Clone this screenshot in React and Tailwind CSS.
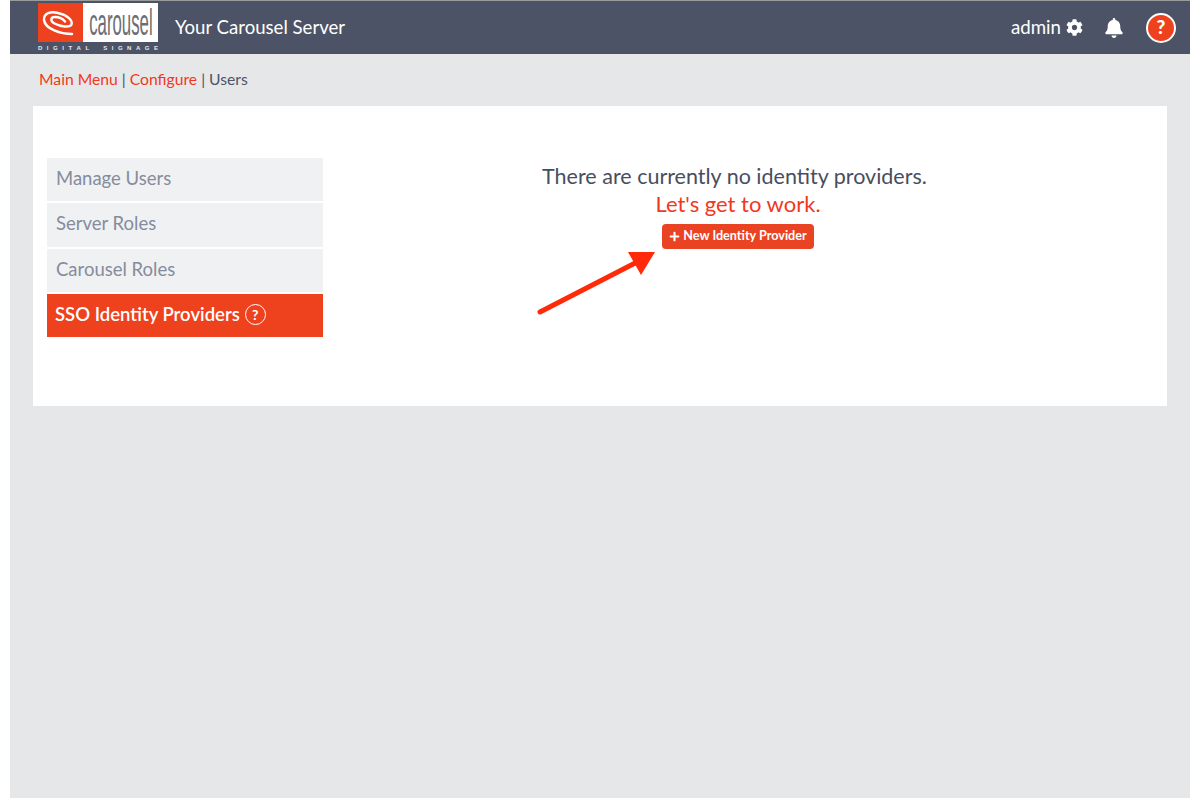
import { FaBell, FaCog, FaPlus } from 'react-icons/fa'

const menu = [
  { label: 'Manage Users', height: 'h-[43px]' },
  { label: 'Server Roles', height: 'h-[44px]' },
  { label: 'Carousel Roles', height: 'h-[43px]' },
]

function Logo() {
  return (
    <div className="flex w-[120px] flex-col">
      <div className="flex h-[39px]">
        <div className="w-[45px] bg-[#ee421e]">
          <svg width="45" height="39" viewBox="0 0 45 39" fill="none" stroke="#fff" strokeLinecap="round">
            <path
              d="M34 31 C23 31 7 26 6 17 C5.5 10 13 8 20 10 C29 12 35 17 33.5 21.5 C32 25 22 23.5 16.5 20.5 C12 18 12.5 14 17 14 C21 14 25 16 27 18.5"
              strokeWidth="2.4"
            />
          </svg>
        </div>
        <div className="flex flex-1 items-center justify-center overflow-hidden bg-white">
          <span className="origin-center scale-x-[0.6] scale-y-[1.3] font-['Liberation_Sans',sans-serif] text-[28px] leading-none text-[#6d6e71]">
            carousel
          </span>
        </div>
      </div>
      <div className="mt-[1px] flex h-[9px] items-center justify-between font-['Liberation_Sans',sans-serif] text-[6px] font-bold leading-none text-[#e8e9ec]">
        {'DIGITAL'.split('').map((c, i) => <span key={i}>{c}</span>)}
        <span className="w-[5px]" />
        {'SIGNAGE'.split('').map((c, i) => <span key={i}>{c}</span>)}
      </div>
    </div>
  )
}

export default function App() {
  return (
    <div className="ml-[10px] mr-[12px] flex min-h-[798px] flex-col bg-[#e6e7e9] font-['Lato',sans-serif]">
      <div className="h-px bg-[#9a9a9a]" />
      <header className="flex h-[53px] items-center bg-[#4d5366] pl-[28px] pr-[14px] text-white">
        <Logo />
        <span className="ml-[17px] text-[18.6px]">Your Carousel Server</span>
        <div className="ml-auto flex items-center">
          <span className="text-[18.7px]">admin</span>
          <FaCog size={17} className="ml-[5px]" />
          <FaBell size={20} className="ml-[21px]" />
          <span className="ml-[22px] flex h-[30px] w-[30px] items-center justify-center rounded-full border-2 border-white bg-[#ee421e] text-[19px] font-black">
            ?
          </span>
        </div>
      </header>
      <nav className="pl-[29px] pt-[14px] text-[15.7px] leading-[22px] text-[#4d5366]">
        <span className="text-[#f0391c]">Main Menu</span> | <span className="text-[#f0391c]">Configure</span> | Users
      </nav>
      <main className="relative mx-[23px] mt-[16px] flex h-[300px] bg-white pl-[14px] pt-[52px]">
        <aside className="flex w-[276px] flex-col gap-[2px] text-[18.5px]">
          {menu.map((item) => (
            <div key={item.label} className={`flex items-center bg-[#f0f1f3] pb-[2px] pl-[9px] text-[#858c9c] ${item.height}`}>
              {item.label}
            </div>
          ))}
          <div className="flex h-[43px] items-center bg-[#ee421e] pb-[2px] pl-[8px] font-semibold text-white">
            SSO Identity Providers
            <span className="ml-[5px] flex h-[21px] w-[21px] items-center justify-center rounded-full border border-white text-[14px] font-bold">
              ?
            </span>
          </div>
        </aside>
        <div className="flex flex-1 flex-col items-center pr-[14px] pt-[4px]">
          <p className="mr-[7px] text-[21.5px] leading-[28px] text-[#484e5e]">There are currently no identity providers.</p>
          <p className="text-[22px] leading-[28px] text-[#f0391c]">Let's get to work.</p>
          <button
            type="button"
            className="mt-[6px] flex h-[25px] w-[152px] items-center justify-center gap-[3px] rounded-[4px] bg-[#ea4324] text-[12.6px] font-bold text-white"
          >
            <FaPlus size={11} />
            New Identity Provider
          </button>
        </div>
        <svg className="absolute left-[500px] top-[140px]" width="130" height="74" viewBox="0 0 130 74">
          <path d="M7 66 L108 14" stroke="#ff2a0a" strokeWidth="5" strokeLinecap="round" />
          <path d="M122 6 L95 6 L108 29 Z" fill="#ff2a0a" />
        </svg>
      </main>
    </div>
  )
}
